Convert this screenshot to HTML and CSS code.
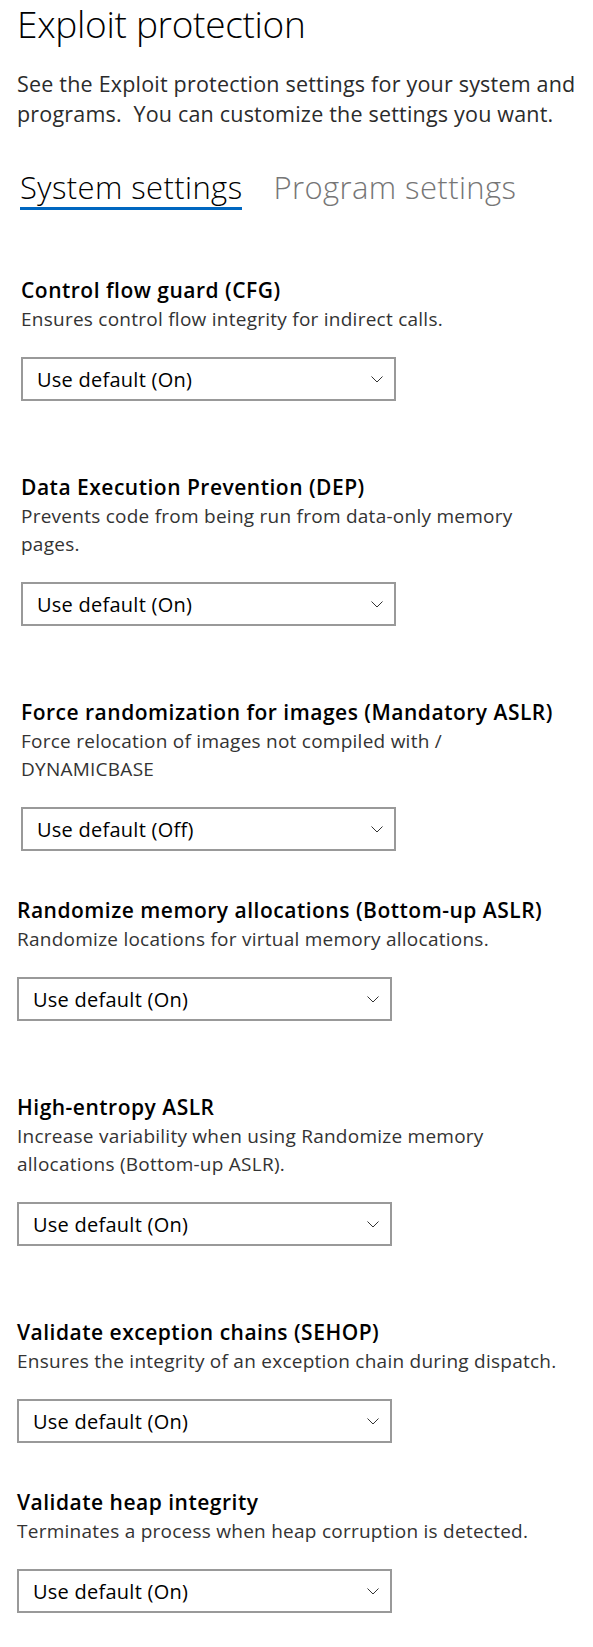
FILE: index.html
```html
<!DOCTYPE html>
<html lang="en">
<head>
<meta charset="utf-8">
<title>Exploit protection</title>
<link rel="stylesheet" href="styles.css">
</head>
<body>
<main class="page">
  <h1 class="page-title">Exploit protection</h1>
  <p class="intro">See the Exploit protection settings for your system and programs.&nbsp; You can customize the settings you want.</p>
  <nav class="tabs">
    <span class="tab tab-active">System settings</span>
    <span class="tab">Program settings</span>
  </nav>

  <section class="setting setting-inset">
    <h2 class="setting-title">Control flow guard (CFG)</h2>
    <p class="setting-desc">Ensures control flow integrity for indirect calls.</p>
    <div class="select"><span class="select-value">Use default (On)</span><svg class="chevron" width="12" height="7" viewBox="0 0 12 7"><polyline points="0.5,0.5 6,6 11.5,0.5" fill="none" stroke="#333" stroke-width="1"/></svg></div>
  </section>

  <section class="setting setting-inset">
    <h2 class="setting-title">Data Execution Prevention (DEP)</h2>
    <p class="setting-desc">Prevents code from being run from data-only memory pages.</p>
    <div class="select"><span class="select-value">Use default (On)</span><svg class="chevron" width="12" height="7" viewBox="0 0 12 7"><polyline points="0.5,0.5 6,6 11.5,0.5" fill="none" stroke="#333" stroke-width="1"/></svg></div>
  </section>

  <section class="setting setting-inset setting-tight">
    <h2 class="setting-title">Force randomization for images (Mandatory ASLR)</h2>
    <p class="setting-desc">Force relocation of images not compiled with /<wbr>DYNAMICBASE</p>
    <div class="select"><span class="select-value">Use default (Off)</span><svg class="chevron" width="12" height="7" viewBox="0 0 12 7"><polyline points="0.5,0.5 6,6 11.5,0.5" fill="none" stroke="#333" stroke-width="1"/></svg></div>
  </section>

  <section class="setting">
    <h2 class="setting-title">Randomize memory allocations (Bottom-up ASLR)</h2>
    <p class="setting-desc">Randomize locations for virtual memory allocations.</p>
    <div class="select"><span class="select-value">Use default (On)</span><svg class="chevron" width="12" height="7" viewBox="0 0 12 7"><polyline points="0.5,0.5 6,6 11.5,0.5" fill="none" stroke="#333" stroke-width="1"/></svg></div>
  </section>

  <section class="setting">
    <h2 class="setting-title">High-entropy ASLR</h2>
    <p class="setting-desc">Increase variability when using Randomize memory allocations (Bottom-up ASLR).</p>
    <div class="select"><span class="select-value">Use default (On)</span><svg class="chevron" width="12" height="7" viewBox="0 0 12 7"><polyline points="0.5,0.5 6,6 11.5,0.5" fill="none" stroke="#333" stroke-width="1"/></svg></div>
  </section>

  <section class="setting setting-tight">
    <h2 class="setting-title">Validate exception chains (SEHOP)</h2>
    <p class="setting-desc">Ensures the integrity of an exception chain during dispatch.</p>
    <div class="select"><span class="select-value">Use default (On)</span><svg class="chevron" width="12" height="7" viewBox="0 0 12 7"><polyline points="0.5,0.5 6,6 11.5,0.5" fill="none" stroke="#333" stroke-width="1"/></svg></div>
  </section>

  <section class="setting">
    <h2 class="setting-title">Validate heap integrity</h2>
    <p class="setting-desc">Terminates a process when heap corruption is detected.</p>
    <div class="select"><span class="select-value">Use default (On)</span><svg class="chevron" width="12" height="7" viewBox="0 0 12 7"><polyline points="0.5,0.5 6,6 11.5,0.5" fill="none" stroke="#333" stroke-width="1"/></svg></div>
  </section>
</main>
</body>
</html>
```

FILE: styles.css
```css
html, body {
  margin: 0;
  padding: 0;
  background: #ffffff;
}

body {
  font-family: "Open Sans", "Noto Sans", "Liberation Sans", sans-serif;
  color: #000;
}

.page {
  width: 570px;
  padding: 0 0 0 17px;
}

.page-title {
  margin: 0;
  font-size: 37px;
  font-weight: 300;
  line-height: 48px;
  color: #000;
  letter-spacing: -0.3px;
}

.intro {
  margin: 21px 0 0;
  font-size: 21.5px;
  line-height: 30px;
  color: #2b2b2b;
  letter-spacing: 0.2px;
}

.tabs {
  display: flex;
  gap: 31px;
  margin-top: 38px;
  padding-left: 3px;
}

.tab {
  font-size: 31px;
  font-weight: 300;
  line-height: 40px;
  color: #767676;
  letter-spacing: 0.4px;
  border-bottom: 3px solid transparent;
}

.tab-active {
  color: #000;
  border-bottom-color: #0067c0;
}

.setting {
  width: 553px;
  margin-top: 76px;
}

.setting-inset {
  margin-left: 4px;
  width: 549px;
}

.tabs + .setting {
  margin-top: 70px;
}

.setting-tight + .setting {
  margin-top: 49px;
}

.setting-title {
  margin: 0;
  font-size: 21px;
  font-weight: 600;
  line-height: 20px;
  color: #000;
  letter-spacing: 0.5px;
}

.setting-desc {
  margin: 5px 0 0;
  font-size: 19px;
  line-height: 28px;
  color: #333;
  letter-spacing: 0.25px;
}

.select {
  box-sizing: border-box;
  width: 375px;
  height: 44px;
  margin-top: 24px;
  border: 2px solid #999;
  display: flex;
  align-items: center;
  justify-content: space-between;
  padding: 0 11px 0 14px;
}

.select-value {
  font-size: 20px;
  color: #000;
  letter-spacing: 0.25px;
}

.chevron {
  display: block;
}
```
